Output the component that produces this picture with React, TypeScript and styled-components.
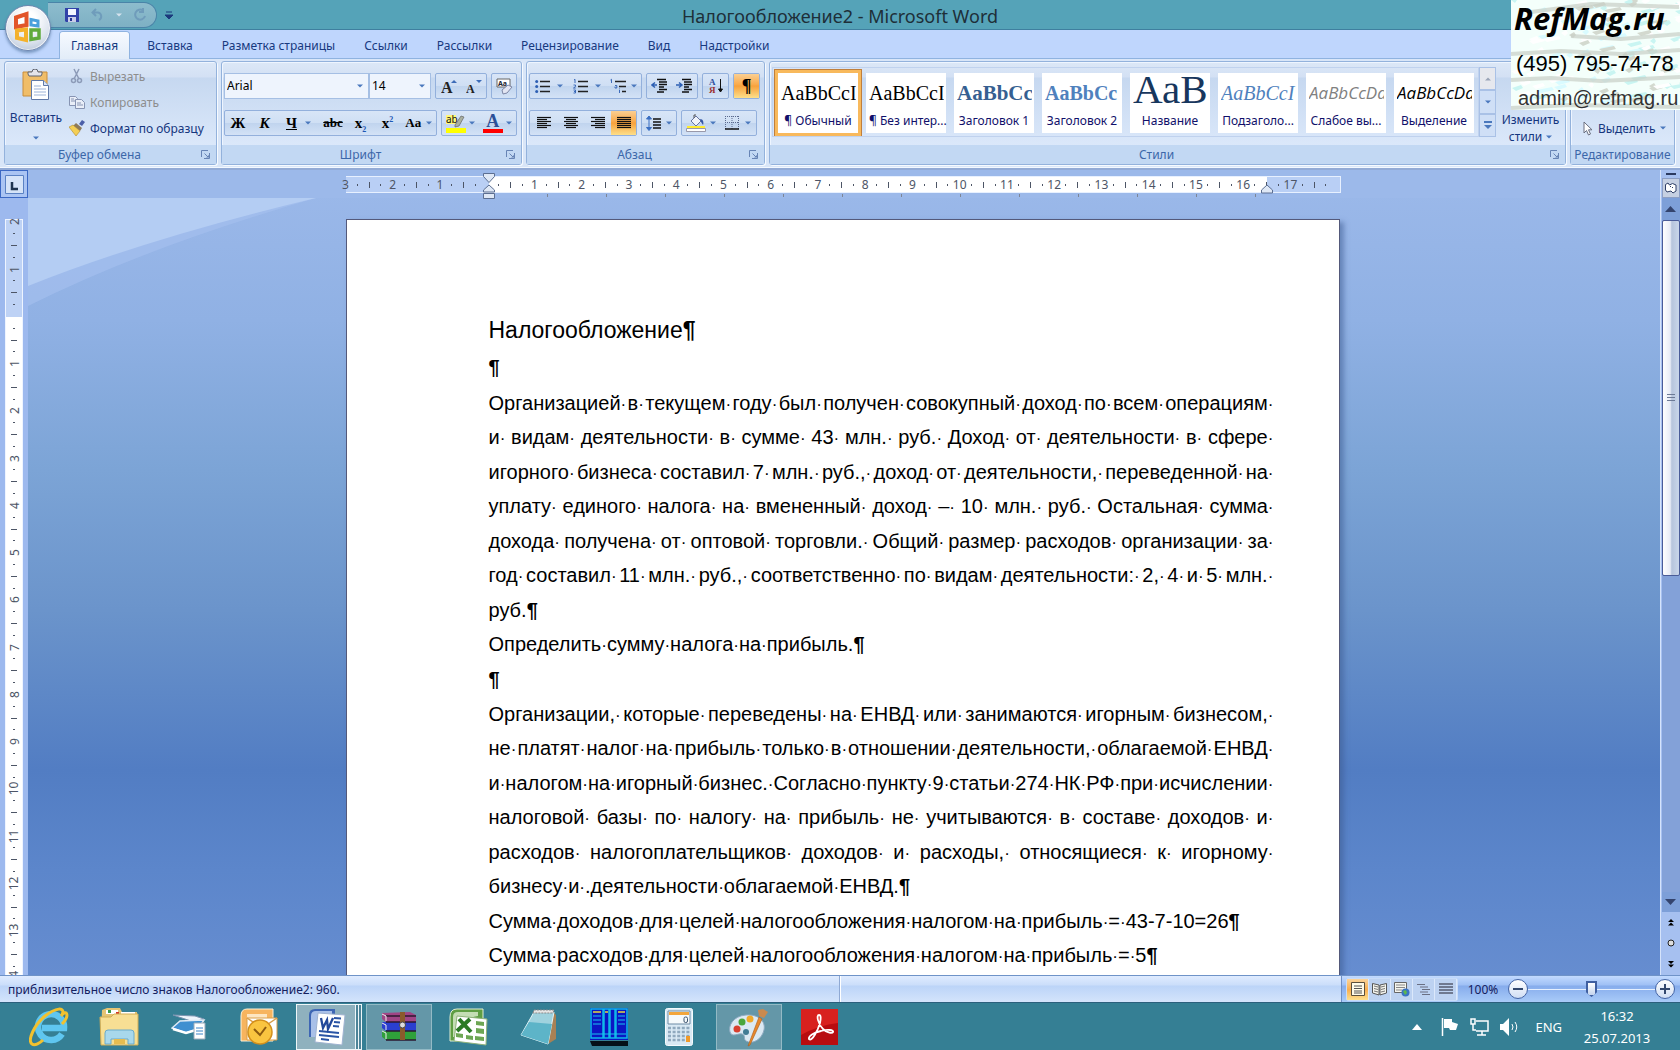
import React from 'react';
import styled, { createGlobalStyle, css } from 'styled-components';

const UI = '"Noto Sans", "Open Sans", sans-serif';
const SERIF = '"Liberation Serif", serif';
const DOC = '"Liberation Sans", Arial, sans-serif';

const GlobalStyle = createGlobalStyle`
  * { box-sizing: border-box; }
  html, body { margin: 0; padding: 0; }
  body { font-family: ${UI}; font-size: 12px; color: #15367e; overflow: hidden; }
  button { font-family: inherit; font-size: inherit; color: inherit; background: none; border: 0; padding: 0; margin: 0; }
  svg { display: block; flex: none; }
`;

/* ---------- Window frame ---------- */

const AppWindow = styled.div`
  position: relative;
  display: flex;
  flex-direction: column;
  height: 100vh;
  background: #bdd3f8;
`;

const TitleBar = styled.header`
  display: flex;
  align-items: center;
  height: 30px;
  background: #55a3b8;
  border-bottom: 1px solid #3f7f9f;
`;
const TitleSide = styled.div`
  flex: 1;
  display: flex;
  align-items: center;
  padding-left: 48px;
`;
const WindowTitle = styled.h1`
  margin: 0;
  padding-top: 2px;
  font-size: 18px;
  line-height: 24px;
  font-weight: 400;
  color: #1e2f38;
  white-space: nowrap;
`;
const QuickAccess = styled.div`
  display: flex;
  align-items: center;
  gap: 12px;
  width: 109px;
  height: 26px;
  padding-left: 17px;
  border: 1px solid #4a84a8;
  border-left: 0;
  border-radius: 0 13px 13px 0;
  background: linear-gradient(#8dbccd, #7eb0c4);
`;
const MoreButton = styled.button`
  margin-left: 8px;
  display: flex;
`;
const OfficeButton = styled.button`
  position: absolute;
  left: 5px;
  top: 5px;
  width: 46px;
  height: 46px;
  border-radius: 50%;
  border: 1px solid #7088b0;
  background: radial-gradient(circle at 50% 30%, #ffffff 20%, #dde4ee 60%, #aab9d2 100%);
  box-shadow: 0 0 0 1px #ffffffaa inset, 0 2px 3px #3b5f8a88;
  display: flex;
  align-items: center;
  justify-content: center;
`;
const Watermark = styled.aside`
  position: absolute;
  right: 0;
  top: 0;
  width: 169px;
  height: 110px;
  overflow: hidden;
  background: #f4fffb;
  color: #000;
  z-index: 3;
`;
const WatermarkTexture = styled.svg`
  position: absolute;
  inset: 0;
`;
const WatermarkText = styled.div`
  position: relative;
  display: flex;
  flex-direction: column;
  padding-left: 3px;
  white-space: nowrap;
`;
const Brand = styled.strong`
  font: italic 700 31px/36px "Open Sans", "Noto Sans", sans-serif;
`;
const Phone = styled.span`
  padding: 10px 0 0 2px;
  font: 22px/36px ${DOC};
`;
const Mail = styled.a`
  padding-left: 4px;
  font: 20px/32px ${DOC};
  color: #333;
  text-decoration: none;
`;

/* ---------- Ribbon ---------- */

const Tabs = styled.nav`
  display: flex;
  gap: 7px;
  height: 29px;
  padding: 2px 0 0 60px;
  background: #bfd6fd;
  border-bottom: 1px solid #8fb3e0;
`;
const Tab = styled.button<{ $active?: boolean }>`
  height: 27px;
  padding: 0 11px;
  line-height: 27px;
  font-size: 12px;
  color: #17397f;
  white-space: nowrap;
  ${p => p.$active && css`
    background: linear-gradient(#f6faff, #e2ecf8);
    border-radius: 3px 3px 0 0;
    box-shadow: 0 0 0 1px #8fb3e0;
    clip-path: inset(-1px -1px 0 -1px);
  `}
`;
const Ribbon = styled.div`
  display: flex;
  gap: 4px;
  height: 109px;
  padding: 2px 5px 2px 4px;
  background: #d9e6f8;
  border-bottom: 1px solid #f2f8ff;
  box-shadow: 0 2px 0 #93abd6;
  position: relative;
`;
const Group = styled.section<{ $w?: number }>`
  display: flex;
  flex-direction: column;
  flex: ${p => (p.$w ? 'none' : '1')};
  ${p => p.$w && `width: ${p.$w}px;`}
  border: 1px solid #93b2dc;
  border-radius: 3px;
  box-shadow: 1px 1px 0 #f6faff, inset 1px 1px 0 #eef5ff;
  background: linear-gradient(#dce8f7 0, #d3e0f4 15px, #c6d8f0 16px, #dbe8fa 84px);
  min-width: 0;
`;
const GroupBody = styled.div<{ $row?: boolean }>`
  display: flex;
  flex-direction: ${p => (p.$row ? 'row' : 'column')};
  flex: 1;
`;
const ToolGroupBody = styled(GroupBody)`
  padding: 11px 2px 0;
  gap: 11px;
`;
const GroupTitle = styled.footer`
  display: flex;
  align-items: center;
  height: 19px;
  background: #c2d8f3;
  color: #3c67a9;
  h2 { flex: 1; margin: 0; font-size: 12px; line-height: 21px; font-weight: 400; text-align: center; white-space: nowrap; }
  button { width: 15px; }
  h2:not(:last-child) { padding-right: 7px; }
`;
const ToolRow = styled.div`
  display: flex;
  gap: 4px;
  height: 26px;
`;
const Segment = styled.div`
  display: flex;
  border: 1px solid #93b0dc;
  border-radius: 2px;
  background: linear-gradient(#d8e5f7, #cfdff4 50%, #c0d4ee 51%, #d3e2f6);
`;
const Tool = styled.button<{ $w: number; $on?: boolean }>`
  display: flex;
  align-items: center;
  justify-content: space-evenly;
  width: ${p => p.$w}px;
  height: 24px;
  color: #000;
  ${p => p.$on && 'background: linear-gradient(#fbcf92, #f9a94a 45%, #f7a13c 50%, #fddf8a);'}
`;
const Glyph = styled.span<{ $size?: number; $italic?: boolean; $line?: string; $color?: string }>`
  font-family: ${SERIF};
  font-size: ${p => p.$size || 15}px;
  line-height: 20px;
  font-weight: 700;
  font-style: ${p => (p.$italic ? 'italic' : 'normal')};
  text-decoration: ${p => p.$line || 'none'};
  color: ${p => p.$color || '#000'};
  sub, sup { font-size: 8px; line-height: 8px; color: #1d57b5; }
`;
const Underbar = styled.span<{ $c: string }>`
  border-bottom: 4px solid ${p => p.$c};
  height: 20px;
  width: 20px;
  display: flex;
  align-items: center;
  justify-content: center;
  font-size: 12px;
  line-height: 14px;
`;
const ComboPair = styled.div`
  display: flex;
`;
const ComboBox = styled.label<{ $w: number }>`
  position: relative;
  display: flex;
  align-items: center;
  width: ${p => p.$w}px;
  padding-right: 5px;
  border: 1px solid #a5bfe4;
  background: #eef4fd;
  select { flex: 1; min-width: 0; height: 24px; padding: 0 2px; appearance: none; border: 0; background: transparent; font: 12px/24px ${UI}; color: #000; }
`;
const PasteButton = styled.button`
  width: 62px;
  display: flex;
  flex-direction: column;
  align-items: center;
  padding-top: 7px;
  gap: 8px;
  font-size: 12px;
  line-height: 20px;
`;
const CommandList = styled.div`
  display: flex;
  flex-direction: column;
  padding: 1px 0 0 2px;
`;
const Command = styled.button<{ $off?: boolean }>`
  display: flex;
  align-items: center;
  gap: 5px;
  height: 26px;
  font-size: 12px;
  white-space: nowrap;
  color: ${p => (p.$off ? '#8d8d8d' : '#15367e')};
`;
const Gallery = styled.div`
  flex: 1;
  min-width: 0;
  display: flex;
  gap: 8px;
  margin: 5px 0 8px 2px;
  padding: 5px 5px 0;
  border: 1px solid #c0d2ee;
  overflow: hidden;
`;
const StyleCard = styled.button<{ $on?: boolean }>`
  flex: none;
  width: 80px;
  height: 60px;
  display: flex;
  flex-direction: column;
  background: #fff;
  padding: 0 2px 0 3px;
  color: #10106a;
  white-space: nowrap;
  ${p => p.$on && 'box-shadow: 0 0 0 3px #f8b95c, 0 0 0 4px #c07f3c;'}
`;
const Preview = styled.span<{ $f?: string; $c?: string; $s?: number; $b?: boolean; $i?: boolean; $lh?: number }>`
  height: 38px;
  width: 75px;
  overflow: hidden;
  text-align: left;
  font-family: ${p => p.$f || SERIF};
  font-size: ${p => p.$s || 20}px;
  line-height: ${p => p.$lh || 40}px;
  color: ${p => p.$c || '#000'};
  font-weight: ${p => (p.$b ? 700 : 400)};
  font-style: ${p => (p.$i ? 'italic' : 'normal')};
`;
const StyleName = styled.span`
  width: 74px;
  font-size: 12px;
  line-height: 24px;
  text-align: center;
  white-space: nowrap;
`;
const GalleryScroll = styled.div`
  display: flex;
  flex-direction: column;
  width: 17px;
  margin: 5px 0 8px;
`;
const GalleryArrow = styled.button<{ $off?: boolean }>`
  flex: 1;
  display: flex;
  align-items: center;
  justify-content: center;
  border: 1px solid #a9c1e6;
  background: ${p => (p.$off ? '#e6e8ee' : '#cfdff6')};
`;
const ChangeStyles = styled.button`
  width: 69px;
  padding-top: 48px;
  line-height: 17px;
  svg { display: inline-block; margin-left: 4px; vertical-align: middle; }
`;
const EditBody = styled(GroupBody)`
  padding: 53px 6px 0 12px;
`;

/* ---------- Document workspace ---------- */

const Workspace = styled.main`
  flex: 1;
  min-height: 0;
  display: grid;
  grid-template-columns: 28px 1fr 20px;
  margin-top: 2px;
  background: linear-gradient(#9cb9ea 0, #90b1e4 150px, #7ca4d6 300px, #6b94cb 440px, #527dc3 600px, #5c86cb 700px, #668dd0);
`;
const RulerColumn = styled.div`
  display: flex;
  flex-direction: column;
  min-height: 0;
  overflow: hidden;
  background: #9db9ee;
`;
const TabSelector = styled.button`
  width: 28px;
  height: 28px;
  flex: none;
  border: 1px solid #3b68c4;
  background: #aac4f3;
  display: flex;
  align-items: center;
  justify-content: center;
`;
const VRuler = styled.div`
  flex: 1;
  min-height: 0;
  width: 18px;
  margin: 21px 0 0 5px;
  border: solid #eef4ff;
  border-width: 1px 1px 0;
  background: linear-gradient(#bed2f5 0 97px, #fff 97px);
`;
const VMarks = styled.div`
  height: 992px;
  margin-top: -4px;
  display: flex;
  flex-direction: column;
`;
const Canvas = styled.div`
  position: relative;
  display: flex;
  flex-direction: column;
  align-items: center;
  min-width: 0;
  min-height: 0;
  overflow: hidden;
`;
const Glare = styled.svg`
  position: absolute;
  left: 0;
  top: 28px;
`;
const HRulerBand = styled.div`
  align-self: stretch;
  display: flex;
  justify-content: center;
  height: 49px;
  flex: none;
  padding: 6px 2px 0 0;
  background: linear-gradient(#9cb9ea 28px, transparent 28px);
`;
const HRuler = styled.div`
  position: relative;
  width: 995px;
  height: 17px;
  padding-right: 3px;
  border: solid #e7f0ff;
  border-width: 1px 1px 1px 0;
  background: linear-gradient(90deg, #b9cff5 0 143px, #fff 143px 921px, #b9cff5 921px);
  &::after {
    content: '';
    position: absolute;
    left: 201px;
    right: 80px;
    top: 17px;
    height: 3px;
    background: repeating-linear-gradient(90deg, #7d8596 0 1px, transparent 1px 59px);
  }
`;
const HMarks = styled.div`
  display: flex;
  width: 992px;
  margin-left: -6px;
`;
const Mark = styled.span<{ $v?: boolean }>`
  flex: 1 1 0;
  min-width: 0;
  min-height: 0;
  display: flex;
  align-items: center;
  justify-content: center;
  font-size: 12px;
  line-height: 15px;
  color: #4d5566;
  white-space: nowrap;
  b { font-weight: 400; ${p => p.$v && 'transform: rotate(-90deg);'} }
  i { background: #4d5566; ${p => (p.$v ? 'width: 6px; height: 1px;' : 'width: 1px; height: 6px;')} }
  u { background: #4d5566; ${p => (p.$v ? 'width: 2px; height: 1px;' : 'width: 1px; height: 2px;')} }
`;
const Indent = styled.svg<{ $x: number }>`
  position: absolute;
  left: ${p => p.$x}px;
  top: -4px;
`;
const PageHolder = styled.div`
  display: flex;
  justify-content: center;
  align-self: stretch;
  padding-right: 3px;
`;
const Page = styled.article`
  position: relative;
  width: 994px;
  min-height: 1120px;
  flex: none;
  padding: 92px 65px 0 142px;
  background: #fff;
  border: 1px solid #54597a;
  box-shadow: 4px 3px 5px #3c5a9088;
  color: #000;
  font-family: ${DOC};
  font-size: 20px;
`;
const Heading = styled.h2`
  margin: 0;
  font-size: 23px;
  line-height: 37px;
  font-weight: 400;
`;
const Paragraph = styled.p`
  margin: 0;
`;
const Line = styled.span<{ $justify?: boolean }>`
  display: flex;
  justify-content: ${p => (p.$justify ? 'space-between' : 'flex-start')};
  line-height: 34px;
  white-space: nowrap;
  &:nth-child(even) { line-height: 35px; }
`;
const Dot = styled.span`
  font-size: 17px;
  line-height: 1px;
`;
const Mark4 = styled.b`
  font-weight: 700;
`;
const Blank = styled.p<{ $h: number }>`
  margin: 0;
  line-height: ${p => p.$h}px;
`;

const ScrollColumn = styled.div`
  display: flex;
  flex-direction: column;
  align-items: center;
  background: #a6c0f0;
  border-left: 1px solid #d5e3fb;
  color: #000;
`;
const SplitHandle = styled.div`
  width: 10px;
  height: 2px;
  margin: 3px 0 3px;
  background: #2b3a60;
`;
const ScrollButton = styled.button<{ $h: number; $plain?: boolean }>`
  display: flex;
  align-items: center;
  justify-content: center;
  width: 18px;
  height: ${p => p.$h}px;
  flex: none;
  background: ${p => (p.$plain ? 'transparent' : '#7d9fd8')};
`;
const RulerToggle = styled(ScrollButton)`
  background: #c6d0e2;
  border: 1px solid #8d9fc4;
`;
const ScrollTrack = styled.div`
  flex: 1;
  width: 18px;
  background: #83a1d8;
`;
const ScrollThumb = styled.div`
  display: flex;
  align-items: center;
  justify-content: center;
  height: 53%;
  border: 1px solid #4a5c98;
  border-radius: 2px;
  background: linear-gradient(90deg, #fff, #e8ecf6 45%, #b6c4dc 55%, #c9d6ea);
`;

/* ---------- Status bar ---------- */

const StatusBar = styled.footer`
  display: flex;
  height: 27px;
  flex: none;
  border-top: 1px solid #6f93c8;
  background: linear-gradient(#dfebff, #cbdefa 9px, #bcd4f8 10px, #d4e4fb);
  color: #14205e;
`;
const StatusText = styled.div`
  flex: 1;
  padding-left: 8px;
  line-height: 27px;
  font-size: 12px;
`;
const StatusPane = styled.div`
  width: 502px;
  border-left: 1px solid #8fa9d4;
  box-shadow: inset 1px 0 0 #fff;
`;
const StatusRight = styled.div`
  display: flex;
  align-items: center;
  width: 339px;
  padding: 0 5px 0 4px;
  border-left: 1px solid #6f8fc4;
  background: linear-gradient(#c2daff, #9fc0f5 9px, #86acec 10px, #a9cbf8);
`;
const Views = styled.div`
  display: flex;
  height: 23px;
  border: 1px solid #c9dcf8;
  border-radius: 2px;
`;
const ViewButton = styled.button<{ $on?: boolean }>`
  width: 22px;
  display: flex;
  align-items: center;
  justify-content: center;
  background: ${p => (p.$on ? 'linear-gradient(#fbd49b, #f8ae50 50%, #fde08e)' : '#bdd2f1')};
  border-right: 1px solid #dbe8fb;
`;
const ZoomLevel = styled.button`
  width: 50px;
  font-size: 12px;
  text-align: center;
`;
const RoundButton = styled.button`
  width: 20px;
  height: 20px;
  flex: none;
  border-radius: 50%;
  border: 1px solid #4565a5;
  background: linear-gradient(#fff, #d0def4);
  display: flex;
  align-items: center;
  justify-content: center;
`;
const ZoomSlider = styled.input`
  flex: 1;
  min-width: 0;
  margin: 0;
  height: 20px;
  appearance: none;
  background: linear-gradient(transparent 10px, #e6f0ff 10px 11px, transparent 11px);
  &::-webkit-slider-thumb {
    appearance: none;
    width: 11px;
    height: 16px;
    background: linear-gradient(#fff, #c4d4ee) padding-box, #3f5fa0 border-box;
    border: 2px solid transparent;
    clip-path: polygon(0 0, 100% 0, 100% 70%, 50% 100%, 0 70%);
  }
`;

/* ---------- Taskbar ---------- */

const Taskbar = styled.nav`
  display: flex;
  align-items: center;
  height: 48px;
  flex: none;
  padding: 0 28px 0 16px;
  background: #357f94;
  border-top: 1px solid #2b5f7c;
  color: #fff;
`;
const TaskList = styled.div`
  display: flex;
  gap: 4px;
  flex: 1;
`;
const TaskButton = styled.button<{ $state?: 'open' | 'stack' }>`
  position: relative;
  width: 66px;
  height: 46px;
  display: flex;
  align-items: center;
  justify-content: center;
  ${p => p.$state === 'open' && 'background: #6497a8; border: 1px solid #93bac5;'}
  ${p => p.$state === 'stack' && css`
    justify-content: flex-start;
    padding-left: 11px;
    background: linear-gradient(90deg, #8fb1be 0 59px, #4d8498 59px);
    border: 1px solid #eef6f8;
    &::before, &::after { content: ''; position: absolute; top: 0; bottom: 0; width: 1px; background: #eef6f8; }
    &::before { left: 58px; }
    &::after { left: 61px; }
  `}
`;
const Tray = styled.div`
  display: flex;
  align-items: center;
  font-size: 13px;
`;
const TrayIcons = styled.div`
  display: flex;
  align-items: center;
  gap: 11px;
  margin-right: 16px;
`;
const TrayArrow = styled.button`
  padding-right: 8px;
`;
const Clock = styled.time`
  width: 70px;
  margin-left: 20px;
  text-align: center;
  line-height: 22px;
  white-space: nowrap;
`;

/* ---------- Small drawings ---------- */

const Caret = ({ c = '#4a78bd', up = false }: { c?: string; up?: boolean }) => (
  <svg width="6" height="4" viewBox="0 0 6 4"><path d={up ? 'M0 3.500 3 .5 6 3.500z' : 'M0 .5h6L3 3.500z'} fill={c} /></svg>
);
const Launcher = () => (
  <svg width="9" height="9" viewBox="0 0 9 9" fill="none" stroke="#6784b5"><path d="M.5 7V.5H7" /><path d="M3.500 3.500 7 7M8.500 3v5.500H3" /><path d="M5 7.500h3V5z" fill="#6784b5" stroke="none" /></svg>
);
const OfficeLogo = () => (
  <svg width="30" height="34" viewBox="0 0 30 34" fill="none">
    <path d="M3 6.500 13.500 3v11L3 16z" stroke="#e2552a" strokeWidth="4" />
    <path d="M18 8.500l7 1.500v5l-7-1z" stroke="#4aa0dc" strokeWidth="3" />
    <path d="M4 19.500l9-1V29l-9-2z" stroke="#f4b12c" strokeWidth="4" />
    <path d="M18 19h8v8l-8 1.500z" stroke="#5faa3c" strokeWidth="3.500" />
  </svg>
);
const SaveIcon = () => (
  <svg width="14" height="14" viewBox="0 0 14 14"><path d="M0 0h14v14H1l-1-1z" fill="#3142a8" /><path d="M3 1h8v6H3z" fill="#f3f5ff" /><path d="M3 9h8v5H3z" fill="#c9cde8" /><path d="M5 10h2v3H5z" fill="#26338f" /></svg>
);
const UndoIcon = ({ flip = false }: { flip?: boolean }) => (
  <svg width="13" height="13" viewBox="0 0 13 13" fill="none" stroke="#6f9cbb" strokeWidth="2"><path d={flip ? 'M9 2.500A5 5 0 1 0 11 8M9 0v4H5' : 'M2 4.500h5a4 4 0 0 1 1 7.500M5 1 1.500 4.500 5 8'} /></svg>
);
const PasteIcon = () => (
  <svg width="28" height="31" viewBox="0 0 28 31"><path d="M1 3h24v24H1z" fill="#f0bd68" stroke="#c98d3b" /><path d="M6 5V3h4a3 3 0 0 1 6 0h4v2l-1 2H7z" fill="#e4e4ea" stroke="#5f6470" /><path d="M9.500 11.500h12l5 5v14h-17z" fill="#fff" stroke="#6079a8" /><path d="M21.500 11.500v5h5" fill="#dbe5f5" stroke="#6079a8" /><path d="M12 17h7M12 20h12M12 23h12M12 26h12" stroke="#9db3d8" /></svg>
);
const ScissorsIcon = () => (
  <svg width="16" height="16" viewBox="0 0 16 16" fill="none" stroke="#8d9bb8" strokeWidth="1.500"><path d="M5 1l5 10M10 1 5 11" /><circle cx="4.500" cy="12.500" r="2" /><circle cx="10.500" cy="12.500" r="2" /></svg>
);
const CopyIcon = () => (
  <svg width="16" height="16" viewBox="0 0 16 16" fill="#e9eef8" stroke="#8794b3"><path d="M.5 2.500h6l2 2v7h-8z" /><path d="M6.500 5.500h6l3 3v6h-9z" /><path d="M2 5h3M2 7h4M8 9h4M8 11h6" /></svg>
);
const BrushIcon = () => (
  <svg width="16" height="16" viewBox="0 0 16 16"><path d="M10 4l3-4 3 2-3 4z" fill="#4b5fa8" /><path d="M7 3l6 5-2 3-7-5z" fill="#8d7a5a" /><path d="M4 5l7 6-4 5-7-9z" fill="#f4cf55" stroke="#b08a2c" strokeWidth=".6" /></svg>
);
const GrowFont = ({ small = false }: { small?: boolean }) => (
  <svg width="16" height="18" viewBox="0 0 16 18"><text x="0" y="16" fontFamily="Liberation Serif, serif" fontWeight="700" fontSize={small ? 12 : 16} fill="#222">A</text><path d={small ? 'M10 3h6l-3 3z' : 'M10 6h6l-3-3z'} fill="#3d6cb8" /></svg>
);
const EraserIcon = () => (
  <svg width="18" height="18" viewBox="0 0 18 18"><path d="M2 2h13v8H2z" fill="#fff" stroke="#666" /><text x="3" y="9" fontFamily="Noto Sans, sans-serif" fontSize="7" fontWeight="700" fill="#223">Aa</text><path d="M7 13l6-5 4 2-5 6-4 1z" fill="#e3e6f3" stroke="#7d86a5" /></svg>
);
const ListIcon = ({ kind }: { kind: 'dot' | 'num' | 'multi' }) => (
  <svg width="16" height="16" viewBox="0 0 16 16">
    {kind === 'multi'
      ? <path d="M5 3.500h11M9 8.500h7M12 13.500h4" stroke="#222" strokeWidth="1.300" />
      : <path d="M5 3.500h10M5 8.500h10M5 13.500h10" stroke="#222" strokeWidth="1.300" />}
    {kind === 'dot' && <g fill="#2d5fb3"><circle cx="1.700" cy="3.500" r="1.500" /><circle cx="1.700" cy="8.500" r="1.500" /><circle cx="1.700" cy="13.500" r="1.500" /></g>}
    {kind === 'num' && <g fill="none" stroke="#2d5fb3" strokeWidth=".9"><path d="M1 2l1-.7V5M.5 7h2v1.500l-2 1.500h2.200M.5 12h2v3h-2M1 13.500h1.500" /></g>}
    {kind === 'multi' && <g fill="none" stroke="#2d5fb3" strokeWidth=".9"><path d="M.5 2l1-.7V5M5 7.500h1.800V10H5V8.700M9.500 12v3M9.500 10.500v.8" /></g>}
  </svg>
);
const IndentIcon = ({ out = false }: { out?: boolean }) => (
  <svg width="17" height="16" viewBox="0 0 17 16"><path d="M6 1.500h9M8 4h8M8 6.500h8M8 9h5M8 11.500h8M6 14h7" stroke="#111" strokeWidth="1.300" /><path d={out ? 'M6 7H2M4 4.500 1 7l3 2.500' : 'M0 7h5M3 4.500 6 7 3 9.500'} stroke="#2d5fb3" strokeWidth="1.500" fill="none" /></svg>
);
const SortIcon = () => (
  <svg width="16" height="18" viewBox="0 0 16 18"><text x="1" y="8" fontSize="9" fontWeight="700" fontFamily="Liberation Serif, serif" fill="#2d4f9f">А</text><text x="1" y="16" fontSize="9" fontWeight="700" fontFamily="Liberation Serif, serif" fill="#9c2f2f">Я</text><path d="M12.500 2v12M10.500 12l2 3 2-3z" stroke="#111" fill="#111" /></svg>
);
const AlignIcon = ({ kind }: { kind: 'l' | 'c' | 'r' | 'j' }) => {
  const short = { l: 'M1 ', c: 'M3 ', r: 'M5 ', j: 'M1 ' }[kind];
  const len = kind === 'j' ? 14 : 10;
  return (
    <svg width="16" height="14" viewBox="0 0 16 14" stroke="#111" strokeWidth="1.200">
      {[1.5, 3.5, 5.5, 7.5, 9.5, 11.5].map((y, i) => <path key={y} d={i % 2 ? `${short}${y}h${len}` : `M1 ${y}h14`} />)}
    </svg>
  );
};
const SpacingIcon = () => (
  <svg width="16" height="16" viewBox="0 0 16 16"><path d="M7 4h8M7 7h8M7 10h8M7 13h8" stroke="#111" strokeWidth="1.300" /><path d="M3 1 .5 4h5zM3 15.500.5 12.500h5zM3 3v10" fill="#3a6fc2" stroke="#3a6fc2" /></svg>
);
const FillIcon = () => (
  <svg width="20" height="18" viewBox="0 0 20 18"><path d="M5 7l5-5 5 5-5 5z" fill="#f0f3fa" stroke="#6674a0" /><path d="M8 4V1h2" stroke="#555" fill="none" /><path d="M14 5c3 0 4 3 3 6l-2-3z" fill="#3559a8" /><path d="M1 12h18v2H1z" fill="#ffec30" /><path d="M.5 14.500h19v3H.5z" fill="#fff" stroke="#99a" /></svg>
);
const BorderIcon = () => (
  <svg width="14" height="14" viewBox="0 0 14 14" fill="none"><path d="M.5 0v13M7 0v13M13.500 0v13M0 .5h14M0 6.500h14" stroke="#5a6a8e" strokeDasharray="1 1" /><path d="M0 13h14" stroke="#111" strokeWidth="1.500" /></svg>
);
const PenIcon = () => (
  <svg width="20" height="20" viewBox="0 0 20 20"><path d="M0 2h10v9H0z" fill="#fff77a" /><text x="0" y="10" fontSize="10" fontFamily="Noto Sans, sans-serif" fill="#111">ab</text><path d="M9 12l6-9 3 1-5 9-4 1z" fill="#a9b0a0" stroke="#666" strokeWidth=".7" /><path d="M0 15h20v5H0z" fill="#ffff00" /></svg>
);
const CursorIcon = () => (
  <svg width="10" height="15" viewBox="0 0 10 15"><path d="M1 1v11l2.500-2.500L5.500 14l2-1-2-4.200H9z" fill="#fff" stroke="#6a6f80" /></svg>
);

/* ---------- View-button drawings ---------- */

const viewIcons: React.ReactNode[] = [
  <svg width="14" height="14" viewBox="0 0 14 14"><path d="M.5.5h13v13H.5z" fill="#fffbe8" stroke="#5a4f3c" /><path d="M3 4h8M3 6.500h8M3 9h8M3 11h8" stroke="#555" /></svg>,
  <svg width="15" height="14" viewBox="0 0 15 14"><path d="M.5 1.500 7 3v10L.5 11zM14.500 1.500 8 3v10l6.500-2z" fill="#f5f5ee" stroke="#555" /><path d="M2 4l4 1M2 6.500l4 1M2 9l4 1M13 4 9 5M13 6.500l-4 1M13 9l-4 1" stroke="#777" /></svg>,
  <svg width="16" height="15" viewBox="0 0 16 15"><path d="M.5.5h12v10H.5z" fill="#f5f5ee" stroke="#666" /><path d="M2 3h9M2 5.500h9M2 8h6" stroke="#888" /><circle cx="11.500" cy="10.500" r="4" fill="#3a74c4" /><path d="M9 9l3-1 1 3-2 2z" fill="#5cb84c" /></svg>,
  <svg width="14" height="13" viewBox="0 0 14 13"><path d="M0 1.500h8M3 4h8M5 6.500h8M3 9h8M5 11.500h8" stroke="#6a6f82" /></svg>,
  <svg width="14" height="12" viewBox="0 0 14 12"><path d="M0 1h14M0 4h14M0 7h14M0 10h14" stroke="#555c70" strokeWidth="1.500" /></svg>,
];

/* ---------- Taskbar drawings ---------- */

const taskIcons: { name: string; state?: 'open' | 'stack'; icon: React.ReactNode }[] = [
  { name: 'Internet Explorer', icon: (
    <svg width="40" height="40" viewBox="0 0 40 40" fill="none"><path d="M33 27a13 13 0 1 1 2-6H13" stroke="#5fc6f0" strokeWidth="6.500" /><path d="M32 9c6-8 9 0 1 8M33 8C37-1 26 1 16 9 6 17-2 33 3 37c3 2 8-1 11-4" stroke="#f2c12e" strokeWidth="3" /></svg>) },
  { name: 'Проводник', icon: (
    <svg width="40" height="40" viewBox="0 0 40 40"><path d="M3 3l5-2h13l2 4h15v31H2z" fill="#e4c474" /><path d="M7 3h12v4H7zM22 5h14v4H22z" fill="#fff" /><path d="M9 3h3v3H9z" fill="#3a9b4a" /><path d="M17 5h3v3h-3z" fill="#d43a2a" /><path d="M1 10h11l3-3h24v31H2z" fill="#f7df94" stroke="#d3ae55" /><path d="M6 26q0-3 3-3h23q3 0 3 3v11h-6v-5H12v5H6z" fill="#a8d8ec" stroke="#6aabcc" /><path d="M15 32h11v5H15z" fill="#e6bc50" /></svg>) },
  { name: 'Сканер', icon: (
    <svg width="36" height="26" viewBox="0 0 36 26"><path d="M2 1l22 1 9 3-10 3z" fill="#eef4fb" stroke="#7a93b0" /><path d="M1 14 9 7l24-1-6 9-12 4z" fill="#3f8fd0" stroke="#dfeaf5" strokeWidth="1.500" /><path d="M2 15l13 4 10-3" stroke="#fff" strokeWidth="2.500" fill="none" /><path d="M23 9h11v16H23z" fill="#fff" stroke="#9ab" /><path d="M25 14h7M25 17h7M25 20h7" stroke="#3a83c8" /></svg>) },
  { name: 'Outlook', icon: (
    <svg width="40" height="38" viewBox="0 0 40 38"><path d="M8 1h26v32H2V8q0-7 6-7z" fill="#f7b45e" stroke="#fff1d6" /><path d="M8 6h20v10H8z" fill="#fde6c2" /><path d="M8 10h30v22H8z" fill="#fff" stroke="#d99f4a" /><path d="M8 10l15 10 15-10" fill="none" stroke="#d99f4a" strokeWidth="1.500" /><circle cx="21" cy="24" r="12" fill="#f9c440" stroke="#d38f1c" strokeWidth="1.500" /><path d="M15 21l6 6 6-8" stroke="#8c5a10" strokeWidth="2" fill="none" /></svg>) },
  { name: 'Word', state: 'stack', icon: (
    <svg width="38" height="40" viewBox="0 0 38 40"><path d="M1 8q0-6 6-6h20v28H1z" fill="#3e66b4" /><path d="M3 9q0-5 5-5h16v4Q12 8 12 30H3z" fill="#a9c0e8" /><path d="M10 6l27 2-3 30-27-3z" fill="#fff" stroke="#9fb2d0" /><path d="M26 11l7 .5M26 15l6 .5M25 19l6 .5M11 24l20 2M11 28l20 2M13 32l8 1" stroke="#2b55a5" strokeWidth="2" /><path d="M13 11l2 10 4-8 1 9 5-11" stroke="#23489a" strokeWidth="2.300" fill="none" /></svg>) },
  { name: 'WinRAR', state: 'open', icon: (
    <svg width="36" height="32" viewBox="0 0 36 32"><path d="M1 2l28-1 6 3v7H5L1 8z" fill="#a04585" /><path d="M1 11h34v9H5l-4-3z" fill="#2a3fd0" /><path d="M1 20h34v9H5l-4-3z" fill="#2fa03a" /><path d="M5 5h30M5 11h30M5 20h30M5 29h30" stroke="#2b1830" strokeWidth="1.500" /><path d="M1 3l4 2v5M1 12l4 2v5M1 20l4 2v6" stroke="#eee" fill="none" /><path d="M19 1h5v28h-5z" fill="#8a5a2c" /><circle cx="21.500" cy="14" r="3" fill="#ddd" stroke="#444" /></svg>) },
  { name: 'Excel', icon: (
    <svg width="40" height="40" viewBox="0 0 40 40"><path d="M1 10q0-8 7-8h26v32H1z" fill="#5f9e43" stroke="#e2efd4" /><path d="M4 10q0-5 5-5h20v4Q14 10 14 30H4z" fill="#c4ddb4" /><path d="M8 9l30 3-1 26-32-4z" fill="#fff" stroke="#8fb27a" /><path d="M27 14l8 1v4l-8-1zM27 21l8 1v5l-8-1zM26 29l9 1v4l-9-1zM17 28l7 1v4l-7-1zM7 26l7 1v4l-7-1z" fill="#6da653" /><path d="M10 12l12 13M21 12 8 24" stroke="#2c7a26" strokeWidth="4" /></svg>) },
  { name: 'Блокнот', icon: (
    <svg width="38" height="38" viewBox="0 0 38 38"><path d="M31 2l5 5v24l-8 5z" fill="#a88155" /><path d="M14 4h20l-6 32L1 27z" fill="#9fd2de" stroke="#e2f3f7" /><path d="M9 14l23 2-4 20L1 27z" fill="#5db4c8" /><path d="M13 5l1-3h20l-1 3z" fill="#e6e6e6" stroke="#888" strokeDasharray="2 1" /></svg>) },
  { name: 'Far', icon: (
    <svg width="38" height="38" viewBox="0 0 38 38"><path d="M0 0h38v32H0z" fill="#0b16c4" /><path d="M1 1h12v29H1zM14 1h5v29h-5zM20 1h5v29h-5zM26 1h11v29H26z" fill="none" stroke="#10b8e8" strokeWidth="1.500" /><path d="M3 8h8M3 12h8M3 16h8M28 8h7M28 12h7M28 16h7M2 26h34" stroke="#19c4f0" /><path d="M3 4h8M28 4h7M15 4h3" stroke="#e8d840" strokeWidth="1.500" /><path d="M0 33h38v5h-36z" fill="#051018" /></svg>) },
  { name: 'Калькулятор', icon: (
    <svg width="28" height="38" viewBox="0 0 28 38"><rect x=".5" y=".5" width="27" height="37" rx="2" fill="#d9e9f4" stroke="#f5fafd" /><path d="M3 3h22v13H3z" fill="#f6fafc" stroke="#6d8ba5" /><path d="M4 4h20v3H4z" fill="#f3a63c" /><rect x="19" y="9" width="3.500" height="5.500" rx="1.500" fill="none" stroke="#3d5570" /><path d="M3 20h22M3 24h22M3 28h22M3 32h22" stroke="#8fa9be" strokeWidth="2.500" strokeDasharray="3 1.600" /><path d="M21 28h4v6h-4z" fill="#f09a2a" /></svg>) },
  { name: 'Paint', state: 'open', icon: (
    <svg width="42" height="40" viewBox="0 0 42 40"><path d="M18 8c12-1 20 6 18 15S25 38 18 34c-3-2 0-6-4-7S4 31 2 25 5 9 18 8z" fill="#dbe9f3" stroke="#8ca9c0" /><circle cx="9" cy="22" r="3.500" fill="#d8402f" /><circle cx="14" cy="15" r="3.500" fill="#4aa63c" /><circle cx="22" cy="12" r="3.500" fill="#f0a92a" /><circle cx="18" cy="25" r="3" fill="#417c94" /><path d="M31 10l3 2-12 26-2 1z" fill="#e8882c" stroke="#a85a18" strokeWidth=".6" /><path d="M30 3l5-1 5 3-4 6-5-2z" fill="#c98a4f" /></svg>) },
  { name: 'Adobe Reader', icon: (
    <svg width="37" height="36" viewBox="0 0 37 36"><path d="M0 0h37v36H0z" fill="#b80d10" /><path d="M0 0h37v14Q18 16 0 26z" fill="#d8211f" /><path d="M18 6c-3 0-1 9 4 14 3 3 9 5 10 3s-5-3-12-1c-6 1-13 5-12 8 3 3 9-9 11-16 1-5 1-8-1-8z" fill="none" stroke="#fff" strokeWidth="1.800" /></svg>) },
];

/* ---------- Content ---------- */

const tabs = ['Главная', 'Вставка', 'Разметка страницы', 'Ссылки', 'Рассылки', 'Рецензирование', 'Вид', 'Надстройки'];

const SANS = '"Open Sans", sans-serif';
const stylesList = [
  { name: '¶ Обычный', sample: 'AaBbCcI' },
  { name: '¶ Без интер...', sample: 'AaBbCcI' },
  { name: 'Заголовок 1', sample: 'AaBbCc', $c: '#365f91', $s: 21, $b: true },
  { name: 'Заголовок 2', sample: 'AaBbCc', $c: '#4f81bd', $s: 20, $b: true },
  { name: 'Название', sample: 'АаВ', $c: '#17365d', $s: 41, $lh: 32 },
  { name: 'Подзаголо...', sample: 'AaBbCcI', $c: '#4f81bd', $s: 20, $i: true },
  { name: 'Слабое вы...', sample: 'AaBbCcDd', $f: SANS, $c: '#808080', $s: 17, $i: true },
  { name: 'Выделение', sample: 'AaBbCcDd', $f: SANS, $s: 17, $i: true },
];

const incomeText = [
  'Организацией в текущем году был получен совокупный доход по всем операциям ',
  'и видам деятельности в сумме 43 млн. руб. Доход от деятельности в сфере ',
  'игорного бизнеса составил 7 млн. руб., доход от деятельности, переведенной на ',
  'уплату единого налога на вмененный доход – 10 млн. руб. Остальная сумма ',
  'дохода получена от оптовой торговли. Общий размер расходов организации за ',
  'год составил 11 млн. руб., соответственно по видам деятельности: 2, 4 и 5 млн. ',
  'руб.¶',
  'Определить сумму налога на прибыль.¶',
];
const answerText = [
  'Организации, которые переведены на ЕНВД или занимаются игорным бизнесом, ',
  'не платят налог на прибыль только в отношении деятельности, облагаемой ЕНВД ',
  'и налогом на игорный бизнес. Согласно пункту 9 статьи 274 НК РФ при исчислении ',
  'налоговой базы по налогу на прибыль не учитываются в составе доходов и ',
  'расходов налогоплательщиков доходов и расходы, относящиеся к игорному ',
  'бизнесу и .деятельности облагаемой ЕНВД.¶',
  'Сумма доходов для целей налогообложения налогом на прибыль = 43-7-10=26¶',
  'Сумма расходов для целей налогообложения налогом на прибыль = 5¶',
];

const ParagraphMark = () => <Mark4>¶</Mark4>;

const TextLine = ({ text }: { text: string }) => {
  const justify = text.endsWith(' ');
  const words = text.replace('¶', '').trim().split(' ');
  return (
    <Line $justify={justify}>
      {words.map((w, i) => (
        <span key={i}>{w}{(justify || i < words.length - 1) && <Dot>·</Dot>}</span>
      ))}
      {!justify && <ParagraphMark />}
    </Line>
  );
};

const Marks = ({ count, zero, vertical }: { count: number; zero: number; vertical?: boolean }) => (
  <>
    {Array.from({ length: count * 4 }, (_, i) => {
      const cm = Math.abs(i / 4 - zero);
      return (
        <Mark key={i} $v={vertical}>
          {i % 4 === 0 ? cm !== 0 && <b>{cm}</b> : i % 4 === 2 ? <i /> : <u />}
        </Mark>
      );
    })}
  </>
);

const RibbonGroup = ({ title, w, launcher = true, children }: { title: string; w?: number; launcher?: boolean; children: React.ReactNode }) => (
  <Group $w={w}>
    {children}
    <GroupTitle><h2>{title}</h2>{launcher && <button aria-label={title}><Launcher /></button>}</GroupTitle>
  </Group>
);

const specks = Array.from({ length: 150 }, (_, i) => ({
  x: (i * 67 + (i * i) % 31) % 169,
  y: (i * 41 + (i * i) % 23) % 110,
  w: 4 + (i * 7) % 13,
  c: ['#c9f5f2', '#ffffff', '#d3d9cf', '#ffffff', '#d9fbff'][i % 5],
}));

export default function App() {
  return (
    <>
      <GlobalStyle />
      <AppWindow>
        <TitleBar>
          <TitleSide>
            <QuickAccess>
              <button aria-label="Сохранить"><SaveIcon /></button>
              <button aria-label="Отменить"><UndoIcon /></button>
              <Caret c="#d5e3ee" />
              <button aria-label="Повторить"><UndoIcon flip /></button>
            </QuickAccess>
            <MoreButton aria-label="Настройка панели"><svg width="8" height="8" viewBox="0 0 8 8"><path d="M1 1h6M0 4h8L4 8z" fill="#1c3a7c" stroke="#1c3a7c" /></svg></MoreButton>
          </TitleSide>
          <WindowTitle>Налогообложение2 - Microsoft Word</WindowTitle>
          <TitleSide />
        </TitleBar>
        <Tabs>{tabs.map((t, i) => <Tab key={t} $active={i === 0}>{t}</Tab>)}</Tabs>
        <OfficeButton aria-label="Office"><OfficeLogo /></OfficeButton>

        <Ribbon>
          <RibbonGroup title="Буфер обмена" w={213}>
            <GroupBody $row>
              <PasteButton><PasteIcon /><span>Вставить</span><Caret /></PasteButton>
              <CommandList>
                <Command $off><ScissorsIcon />Вырезать</Command>
                <Command $off><CopyIcon />Копировать</Command>
                <Command><BrushIcon />Формат по образцу</Command>
              </CommandList>
            </GroupBody>
          </RibbonGroup>

          <RibbonGroup title="Шрифт" w={301}>
            <ToolGroupBody>
              <ToolRow>
                <ComboPair>
                  <ComboBox $w={145}><select aria-label="Шрифт"><option>Arial</option></select><Caret /></ComboBox>
                  <ComboBox $w={62}><select aria-label="Размер"><option>14</option></select><Caret /></ComboBox>
                </ComboPair>
                <Segment><Tool $w={25} aria-label="Увеличить"><GrowFont /></Tool><Tool $w={25} aria-label="Уменьшить"><GrowFont small /></Tool></Segment>
                <Segment><Tool $w={24} aria-label="Очистить формат"><EraserIcon /></Tool></Segment>
              </ToolRow>
              <ToolRow>
                <Segment>
                  <Tool $w={26}><Glyph>Ж</Glyph></Tool>
                  <Tool $w={27}><Glyph $italic>К</Glyph></Tool>
                  <Tool $w={41}><Glyph $line="underline">Ч</Glyph><Caret /></Tool>
                  <Tool $w={28}><Glyph $size={13} $line="line-through">abc</Glyph></Tool>
                  <Tool $w={27}><Glyph>x<sub>2</sub></Glyph></Tool>
                  <Tool $w={27}><Glyph>x<sup>2</sup></Glyph></Tool>
                  <Tool $w={35}><Glyph $size={13}>Aa</Glyph><Caret /></Tool>
                </Segment>
                <Segment>
                  <Tool $w={37} aria-label="Цвет выделения"><PenIcon /><Caret /></Tool>
                  <Tool $w={37}><Underbar $c="#f00"><Glyph $size={18} $color="#2b4f97">A</Glyph></Underbar><Caret /></Tool>
                </Segment>
              </ToolRow>
            </ToolGroupBody>
          </RibbonGroup>

          <RibbonGroup title="Абзац" w={239}>
            <ToolGroupBody>
              <ToolRow>
                <Segment>
                  <Tool $w={38} aria-label="Маркеры"><ListIcon kind="dot" /><Caret /></Tool>
                  <Tool $w={38} aria-label="Нумерация"><ListIcon kind="num" /><Caret /></Tool>
                  <Tool $w={35} aria-label="Многоуровневый список"><ListIcon kind="multi" /><Caret /></Tool>
                </Segment>
                <Segment><Tool $w={25} aria-label="Уменьшить отступ"><IndentIcon out /></Tool><Tool $w={25} aria-label="Увеличить отступ"><IndentIcon /></Tool></Segment>
                <Segment><Tool $w={25} aria-label="Сортировка"><SortIcon /></Tool></Segment>
                <Segment><Tool $w={25} $on><Glyph $size={18}>¶</Glyph></Tool></Segment>
              </ToolRow>
              <ToolRow>
                <Segment>
                  <Tool $w={27} aria-label="По левому краю"><AlignIcon kind="l" /></Tool>
                  <Tool $w={27} aria-label="По центру"><AlignIcon kind="c" /></Tool>
                  <Tool $w={27} aria-label="По правому краю"><AlignIcon kind="r" /></Tool>
                  <Tool $w={25} $on aria-label="По ширине"><AlignIcon kind="j" /></Tool>
                </Segment>
                <Segment><Tool $w={34} aria-label="Интервал"><SpacingIcon /><Caret /></Tool></Segment>
                <Segment>
                  <Tool $w={38} aria-label="Заливка"><FillIcon /><Caret /></Tool>
                  <Tool $w={36} aria-label="Границы"><BorderIcon /><Caret /></Tool>
                </Segment>
              </ToolRow>
            </ToolGroupBody>
          </RibbonGroup>

          <RibbonGroup title="Стили">
            <GroupBody $row>
              <Gallery>
                {stylesList.map(({ name, sample, ...look }, i) => (
                  <StyleCard key={name} $on={i === 0}>
                    <Preview {...look}>{sample}</Preview>
                    <StyleName>{name}</StyleName>
                  </StyleCard>
                ))}
              </Gallery>
              <GalleryScroll>
                <GalleryArrow $off aria-label="Вверх"><Caret up c="#9aa4b8" /></GalleryArrow>
                <GalleryArrow aria-label="Вниз"><Caret /></GalleryArrow>
                <GalleryArrow aria-label="Дополнительно"><svg width="8" height="8" viewBox="0 0 8 8"><path d="M0 0h8v2H0zM0 4h8L4 8z" fill="#4a78bd" /></svg></GalleryArrow>
              </GalleryScroll>
              <ChangeStyles>Изменить<br />стили<Caret /></ChangeStyles>
            </GroupBody>
          </RibbonGroup>

          <RibbonGroup title="Редактирование" w={105} launcher={false}>
            <EditBody>
              <Command><CursorIcon />Выделить<Caret /></Command>
            </EditBody>
          </RibbonGroup>
        </Ribbon>

        <Watermark>
          <WatermarkTexture width="169" height="110">
            {specks.map((s, i) => <path key={i} d={`M${s.x} ${s.y}l${s.w} -3 2 3 -${s.w - 2} 3z`} fill={s.c} />)}
            <path d="M20 12l60-8 88 3M60 36l50 3 59-5M0 54l50-3 60 3 59-4M0 80l40-2 50 3 79-4M0 108l60-3 109 2" stroke="#c8cfc6" strokeWidth="4" fill="none" opacity=".7" />
          </WatermarkTexture>
          <WatermarkText>
            <Brand>RefMag.ru</Brand>
            <Phone>(495) 795-74-78</Phone>
            <Mail href="mailto:admin@refmag.ru">admin@refmag.ru</Mail>
          </WatermarkText>
        </Watermark>

        <Workspace>
          <RulerColumn>
            <TabSelector aria-label="Табуляция">
              <svg width="19" height="19" viewBox="0 0 19 19"><path d="M.5.5h18v18H.5z" fill="#d5e3f8" stroke="#5b82c4" /><path d="M7 7v7h6" fill="none" stroke="#1f3450" strokeWidth="2.500" /></svg>
            </TabSelector>
            <VRuler><VMarks><Marks count={21} zero={2} vertical /></VMarks></VRuler>
          </RulerColumn>
          <Canvas>
            <HRulerBand>
              <HRuler>
                <HMarks><Marks count={21} zero={3} /></HMarks>
                <Indent $x={137} width="12" height="27" viewBox="0 0 12 27"><path d="M.5.5h11v3L6 9.500.5 3.500zM6 12l5.500 5v2H.5v-2zM.5 20.500h11v5H.5z" fill="#dfe8f6" stroke="#5c6f92" /></Indent>
                <Indent $x={915} width="12" height="27" viewBox="0 0 12 27"><path d="M6 12l5.500 5v3H.5v-3z" fill="#dfe8f6" stroke="#5c6f92" /></Indent>
              </HRuler>
            </HRulerBand>
            <Glare width="300" height="112" viewBox="0 0 300 112">
              <path d="M0 0h288Q120 48 0 108z" fill="#a4bfee" opacity=".7" />
              <path d="M0 0h288Q120 40 0 88z" fill="#b4cdf3" />
            </Glare>
            <PageHolder>
              <Page>
                <Heading>Налогообложение<ParagraphMark /></Heading>
                <Blank $h={37}><ParagraphMark /></Blank>
                <Paragraph>{incomeText.map(t => <TextLine key={t} text={t} />)}</Paragraph>
                <Blank $h={35}><ParagraphMark /></Blank>
                <Paragraph>{answerText.map(t => <TextLine key={t} text={t} />)}</Paragraph>
              </Page>
            </PageHolder>
          </Canvas>
          <ScrollColumn>
            <SplitHandle />
            <RulerToggle $h={20} aria-label="Линейка"><svg width="12" height="12" viewBox="0 0 12 12"><path d="M.5 2.500 3 1l1.500 2 3-1.500L11 3v6l-3 2-2-2-4 1-1.500-2z" fill="#fff" stroke="#2f3f66" /><path d="M5 4l1 1M7 5l1 1" stroke="#2f3f66" /></svg></RulerToggle>
            <ScrollButton $h={22} aria-label="Вверх"><svg width="11" height="6"><path d="M0 6 5.500 0 11 6z" fill="#34446e" /></svg></ScrollButton>
            <ScrollTrack>
              <ScrollThumb><svg width="8" height="8"><path d="M0 .5h8M0 3.500h8M0 6.500h8" stroke="#6d7a96" /></svg></ScrollThumb>
            </ScrollTrack>
            <ScrollButton $h={20} aria-label="Вниз"><svg width="11" height="6"><path d="M0 0h11L5.500 6z" fill="#34446e" /></svg></ScrollButton>
            <ScrollButton $h={20} $plain aria-label="Предыдущая страница"><svg width="6" height="7"><path d="M0 3 3 0l3 3zM0 6.500l3-3 3 3z" fill="#000" /></svg></ScrollButton>
            <ScrollButton $h={22} $plain aria-label="Объект перехода"><svg width="8" height="8"><circle cx="4" cy="4" r="3" fill="#ddd" stroke="#222" /></svg></ScrollButton>
            <ScrollButton $h={21} $plain aria-label="Следующая страница"><svg width="6" height="7"><path d="M0 0h6L3 3zM0 3.500h6l-3 3z" fill="#000" /></svg></ScrollButton>
          </ScrollColumn>
        </Workspace>

        <StatusBar>
          <StatusText>приблизительное число знаков Налогообложение2: 960.</StatusText>
          <StatusPane />
          <StatusRight>
            <Views>{viewIcons.map((icon, i) => <ViewButton key={i} $on={i === 0} aria-label={`Режим ${i + 1}`}>{icon}</ViewButton>)}</Views>
            <ZoomLevel>100%</ZoomLevel>
            <RoundButton aria-label="Уменьшить масштаб"><svg width="10" height="2"><path d="M0 0h10v2H0z" fill="#33486e" /></svg></RoundButton>
            <ZoomSlider type="range" aria-label="Масштаб" min={0} max={100} defaultValue={50} />
            <RoundButton aria-label="Увеличить масштаб"><svg width="10" height="10"><path d="M0 4h10v2H0zM4 0h2v10H4z" fill="#33486e" /></svg></RoundButton>
          </StatusRight>
        </StatusBar>

        <Taskbar>
          <TaskList>
            {taskIcons.map(t => <TaskButton key={t.name} $state={t.state} aria-label={t.name}>{t.icon}</TaskButton>)}
          </TaskList>
          <Tray>
            <TrayIcons>
              <TrayArrow aria-label="Скрытые значки"><svg width="10" height="6"><path d="M0 6 5 0l5 6z" fill="#fff" /></svg></TrayArrow>
              <svg width="18" height="18" viewBox="0 0 18 18"><path d="M1.500 0v18" stroke="#fff" strokeWidth="1.500" /><path d="M3 1h8v3l6 2-2 6H9l-1-2H3z" fill="#fff" /></svg>
              <svg width="19" height="18" viewBox="0 0 19 18" fill="none" stroke="#fff" strokeWidth="1.500"><path d="M6 3h12v10H6M12 13v4M7 17h9M3 6v6h3" /><path d="M1 1h4v5H1z" /></svg>
              <svg width="19" height="18" viewBox="0 0 19 18"><path d="M0 6h3l6-6v18l-6-6H0z" fill="#fff" /><path d="M12 6q2 3 0 6M15 4q3.500 5 0 10" stroke="#fff" fill="none" /></svg>
            </TrayIcons>
            <span>ENG</span>
            <Clock>16:32<br />25.07.2013</Clock>
          </Tray>
        </Taskbar>
      </AppWindow>
    </>
  );
}
